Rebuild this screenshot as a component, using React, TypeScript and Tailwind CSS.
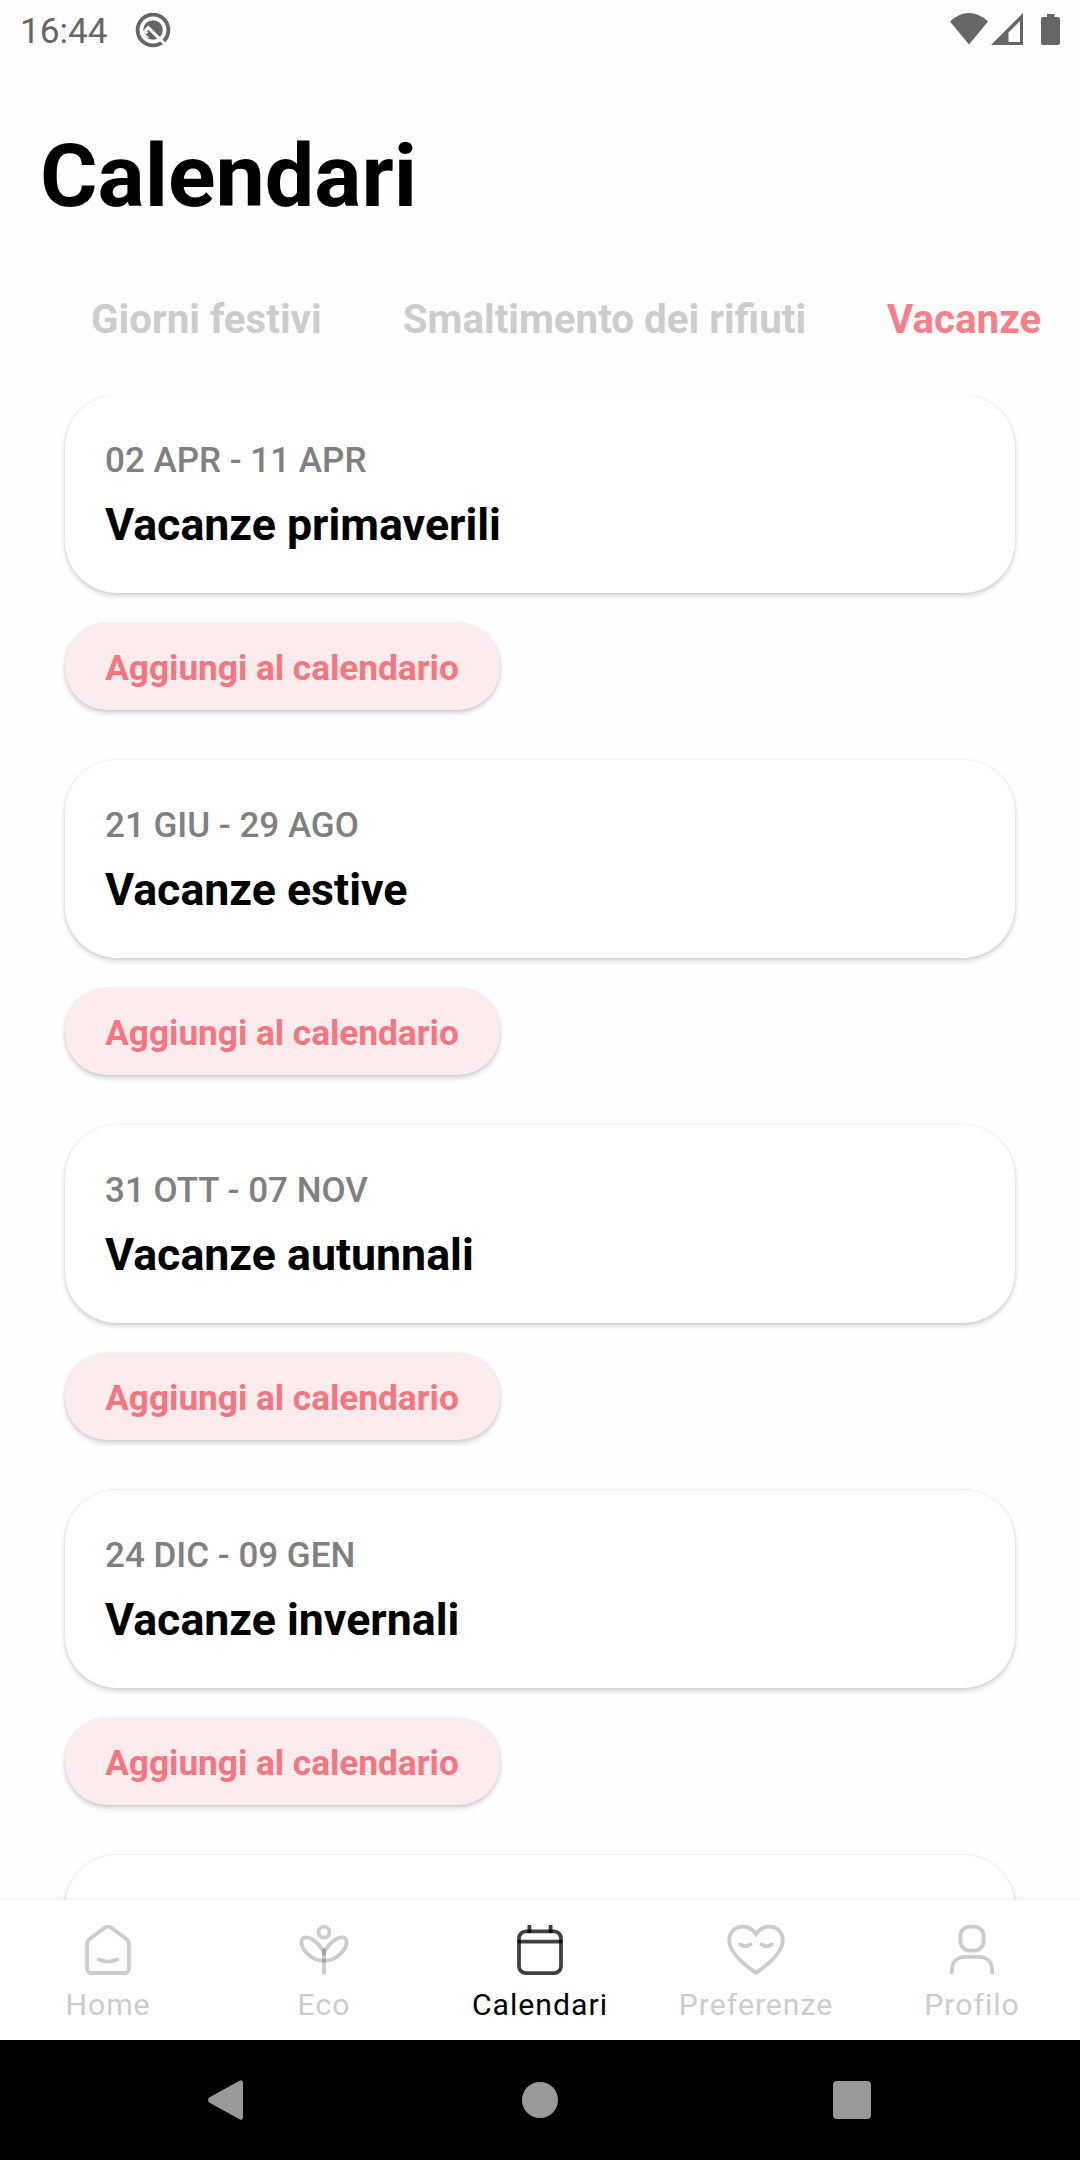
import React from "react";

type Holiday = {
  date: string;
  title: string;
};

const tabs = [
  { label: "Giorni festivi", active: false },
  { label: "Smaltimento dei rifiuti", active: false },
  { label: "Vacanze", active: true },
];

const holidays: Holiday[] = [
  { date: "02 APR - 11 APR", title: "Vacanze primaverili" },
  { date: "21 GIU - 29 AGO", title: "Vacanze estive" },
  { date: "31 OTT - 07 NOV", title: "Vacanze autunnali" },
  { date: "24 DIC - 09 GEN", title: "Vacanze invernali" },
];

const StatusBar: React.FC = () => {
  return (
    <div className="h-[60px] shrink-0 flex items-center justify-between pl-[20px] pr-[20px] text-[#666]">
      <div className="flex items-center">
        <span className="w-[115px] text-[35.2px] leading-[60px] pt-[2px]">16:44</span>
        <svg className="w-[36px] h-[36px]" viewBox="-18 -18 36 36" fill="none">
          <circle r="15.4" stroke="#666" strokeWidth="3.8" />
          <circle r="9.8" fill="#666" />
          <path d="M-10.5 3.5L-4.7 -2.3L12.6 14.8" stroke="#fefefe" strokeWidth="3" />
          <path d="M-9.5 4.5L-6 1L-2 5L-5 8Z" fill="#fefefe" />
          <path d="M-7.3 4.6L-4.2 1.8L0 5.6L-3 8Z" fill="#666" />
        </svg>
      </div>
      <svg className="w-[112px] h-[36px]" viewBox="948 12 112 36" fill="#666">
        <path d="M950 21.5C956 16 962 13 969 13C976 13 982 16 988 21.5L969 44.5Z" />
        <path fillRule="evenodd" d="M1023 13V45H991ZM1020 21L1008.5 32.5V42H1020Z" />
        <path d="M1047 14H1054.5V17H1058Q1060 17 1060 19V43Q1060 45 1058 45H1043Q1041 45 1041 43V19Q1041 17 1043 17H1047Z" />
      </svg>
    </div>
  );
};

const HolidayItem: React.FC<Holiday> = ({ date, title }) => {
  return (
    <div className="h-[365px] shrink-0">
      <div className="h-[198px] rounded-[52px] bg-white px-[40px] pt-[45px] shadow-[0_3px_5px_rgba(0,0,0,0.16),0_0_3px_rgba(0,0,0,0.1)]">
        <p className="text-[35px] leading-[42px] font-medium text-[#808080]">{date}</p>
        <h2 className="mt-[17px] text-[44.7px] leading-[52px] font-bold text-black">{title}</h2>
      </div>
      <button className="mt-[30px] h-[87px] w-[435px] rounded-[42px] bg-[#fdecee] pt-[2px] pr-[1px] text-[35.2px] leading-[42px] font-bold text-[#f6757e] shadow-[0_3px_5px_rgba(0,0,0,0.18),0_0_3px_rgba(0,0,0,0.08)]">
        Aggiungi al calendario
      </button>
    </div>
  );
};

const HomeIcon = () => (
  <>
    <path d="M-21 22.5Q-21 19 -18 16.8L-3.3 5.8Q0 3.4 3.3 5.8L18 16.8Q21 19 21 22.5V46Q21 51 16 51H-16Q-21 51 -21 46Z" />
    <path d="M-9 37.5Q0 41.8 9 37.5" strokeLinecap="round" />
  </>
);

const EcoIcon = () => (
  <>
    <circle cx="0" cy="10.2" r="5.5" />
    <path d="M0 38.4C-12 40 -22.8 27 -22.6 20C-22.4 13.5 -15 14.5 -9 19.3C-3.5 24 0 29 0 33.5C0 29 3.5 24 9 19.3C15 14.5 22.4 13.5 22.6 20C22.8 27 12 40 0 38.4Z" />
    <path d="M0 28V51" strokeLinecap="round" />
  </>
);

const CalendarIcon = () => (
  <>
    <rect x="-21" y="9.4" width="42" height="41.8" rx="7" />
    <path d="M-22.5 19.7H22.5" />
    <path d="M-10.6 3V11" />
    <path d="M10.6 3V11" />
  </>
);

const HeartIcon = () => (
  <>
    <path d="M0 51C-17 39 -26.8 28.5 -26.8 18.5C-26.8 10 -20.5 4.7 -13.3 4.7C-7.5 4.7 -3 7.5 0 12.3C3 7.5 7.5 4.7 13.3 4.7C20.5 4.7 26.8 10 26.8 18.5C26.8 28.5 17 39 0 51Z" />
    <path d="M-15.7 22.4Q-10.5 26 -5.5 22.4M5.5 22.4Q10.5 26 15.7 22.4" strokeLinecap="round" />
  </>
);

const ProfileIcon = () => (
  <>
    <rect x="-11.7" y="4.6" width="23.4" height="24" rx="9.5" />
    <path d="M-20.2 52V49C-20.2 40 -15 34.8 -7 34.8H7C15 34.8 20.2 40 20.2 49V52" />
  </>
);

const navItems = [
  { label: "Home", Icon: HomeIcon, active: false },
  { label: "Eco", Icon: EcoIcon, active: false },
  { label: "Calendari", Icon: CalendarIcon, active: true },
  { label: "Preferenze", Icon: HeartIcon, active: false },
  { label: "Profilo", Icon: ProfileIcon, active: false },
];

const BottomNav: React.FC = () => {
  return (
    <nav className="relative h-[140px] shrink-0 grid grid-cols-5 bg-white shadow-[0_-1px_5px_rgba(0,0,0,0.08)]">
      {navItems.map(({ label, Icon, active }) => (
        <div key={label} className="flex flex-col items-center pt-[22px]">
          <svg
            className={active ? "w-16 h-14 stroke-black/75" : "w-16 h-14 stroke-black/20"}
            viewBox="-32 0 64 56"
            fill="none"
            strokeWidth="3.8"
          >
            <Icon />
          </svg>
          <span
            className={
              active
                ? "mt-[9px] text-[30.2px] leading-[36px] tracking-[1px] text-black"
                : "mt-[9px] text-[30.2px] leading-[36px] tracking-[1px] text-[#ccc]"
            }
          >
            {label}
          </span>
        </div>
      ))}
    </nav>
  );
};

const SystemBar: React.FC = () => {
  return (
    <div className="h-[120px] shrink-0 bg-black flex items-center pl-[208px]">
      <svg className="w-[35px] h-[40px]" viewBox="0 0 35 40" fill="#999">
        <path d="M1.2 17.6L31.5 0.8Q35 -1 35 3V37Q35 41 31.5 39.2L1.2 22.4Q-1.2 20 1.2 17.6Z" />
      </svg>
      <div className="ml-[279px] w-[36px] h-[36px] rounded-full bg-[#999]"></div>
      <div className="ml-[275px] w-[38px] h-[38px] rounded-[4px] bg-[#999]"></div>
    </div>
  );
};

const App: React.FC = () => {
  return (
    <div className="w-[1080px] h-[2160px] flex flex-col overflow-hidden bg-[#fefefe] font-['Roboto',sans-serif]">
      <StatusBar />
      <h1 className="mt-[64px] pl-[40px] text-[88px] leading-[104px] font-bold text-black">Calendari</h1>
      <div className="mt-[68px] pl-[91px] flex gap-[81px] whitespace-nowrap text-[40.3px] leading-[48px] font-bold">
        {tabs.map((tab) => (
          <span key={tab.label} className={tab.active ? "text-[#f77f88]" : "text-[#ccc]"}>
            {tab.label}
          </span>
        ))}
      </div>
      <div className="mt-[51px] flex-1 min-h-0 overflow-hidden px-[65px] flex flex-col -mb-px">
        {holidays.map((holiday) => (
          <HolidayItem key={holiday.title} {...holiday} />
        ))}
        <div className="h-[198px] shrink-0 rounded-[52px] bg-white shadow-[0_3px_5px_rgba(0,0,0,0.16),0_0_3px_rgba(0,0,0,0.1)]"></div>
      </div>
      <BottomNav />
      <SystemBar />
    </div>
  );
};

export default App;
